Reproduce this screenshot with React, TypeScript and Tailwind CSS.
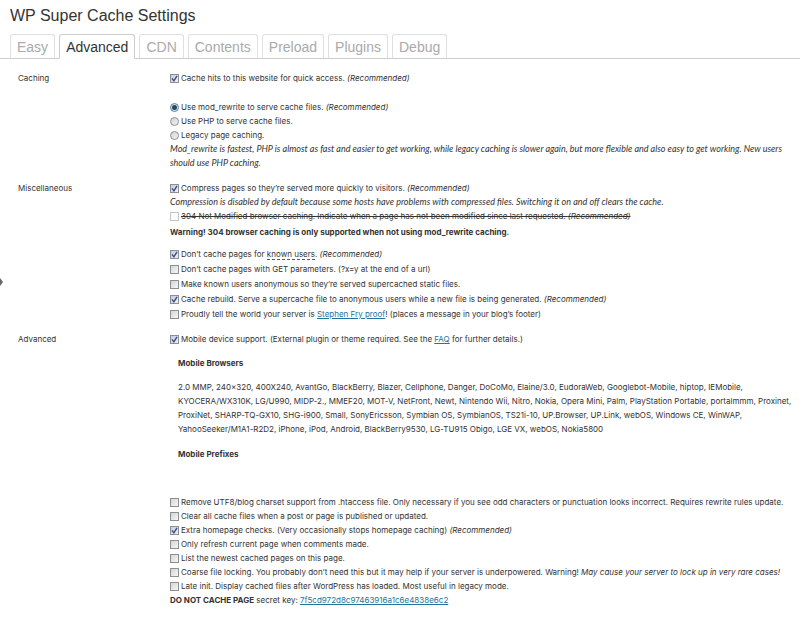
import { useId, useState, type ReactNode } from "react";

const tabs = ["Easy", "Advanced", "CDN", "Contents", "Preload", "Plugins", "Debug"];

const browserLines = [
  "2.0 MMP, 240x320, 400X240, AvantGo, BlackBerry, Blazer, Cellphone, Danger, DoCoMo, Elaine/3.0, EudoraWeb, Googlebot-Mobile, hiptop, IEMobile,",
  "KYOCERA/WX310K, LG/U990, MIDP-2., MMEF20, MOT-V, NetFront, Newt, Nintendo Wii, Nitro, Nokia, Opera Mini, Palm, PlayStation Portable, portalmmm, Proxinet,",
  "ProxiNet, SHARP-TQ-GX10, SHG-i900, Small, SonyEricsson, Symbian OS, SymbianOS, TS21i-10, UP.Browser, UP.Link, webOS, Windows CE, WinWAP,",
  "YahooSeeker/M1A1-R2D2, iPhone, iPod, Android, BlackBerry9530, LG-TU915 Obigo, LGE VX, webOS, Nokia5800",
];

function Recommended() {
  return <em>(Recommended)</em>;
}

function Check({ checked = false, disabled = false, children }: { checked?: boolean; disabled?: boolean; children: ReactNode }) {
  const id = useId();
  return (
    <div className="flex min-h-[14px] items-center gap-[2px]">
      <span className="grid size-[9px] shrink-0">
        <input
          id={id}
          type="checkbox"
          defaultChecked={checked}
          disabled={disabled}
          className="peer col-start-1 row-start-1 size-[9px] appearance-none border border-[#8e8f8f] bg-linear-to-br from-[#d3d6da] to-[#f6f6f6] checked:from-[#c3cbdc] checked:to-[#eef1f8] disabled:border-[#c4c4c4] disabled:from-[#fafafa] disabled:to-white"
        />
        <svg viewBox="0 0 9 9" className="pointer-events-none invisible col-start-1 row-start-1 size-[9px] peer-checked:visible" fill="none" stroke="#3a4c86" strokeWidth="1.4">
          <path d="M2 4.3 L3.9 6.8 L7 1.8" />
        </svg>
      </span>
      <label htmlFor={id} className={disabled ? "line-through" : ""}>
        {children}
      </label>
    </div>
  );
}

function Radio({ checked = false, children }: { checked?: boolean; children: ReactNode }) {
  const id = useId();
  return (
    <div className="flex min-h-[14px] items-center gap-[2px]">
      <span className="grid size-[9px] shrink-0 place-items-center">
        <input
          id={id}
          type="radio"
          name="delivery"
          defaultChecked={checked}
          className="peer col-start-1 row-start-1 size-[9px] appearance-none rounded-full border border-[#8e8f8f] bg-linear-to-br from-[#cfd1d4] to-[#f4f4f4] checked:border-[#5f7d93] checked:from-[#c5dbe8] checked:to-[#e6f2f8]"
        />
        <span className="pointer-events-none invisible col-start-1 row-start-1 size-[5px] rounded-full bg-[#1b4a6b] peer-checked:visible" />
      </span>
      <label htmlFor={id}>{children}</label>
    </div>
  );
}

function Link({ children }: { children: ReactNode }) {
  return (
    <a href="#" className="text-[#21759b] underline">
      {children}
    </a>
  );
}

function Note({ children }: { children: ReactNode }) {
  return <p className="font-[Lato,sans-serif] text-[9px] leading-[14px] italic">{children}</p>;
}

function Section({ title, children }: { title: string; children: ReactNode }) {
  return (
    <section className="flex">
      <h2 className="w-[152px] shrink-0">{title}</h2>
      <div className="min-w-0 flex-1">{children}</div>
    </section>
  );
}

export default function App() {
  const [active, setActive] = useState("Advanced");
  return (
    <div className="relative min-h-screen bg-white font-['Liberation_Sans',Arial,sans-serif] text-[#333]">
      <span className="absolute top-[278px] left-0 h-0 w-0 border-y-4 border-l-[3px] border-y-transparent border-l-[#666]" />
      <h1 className="px-[10px] pt-[6px] text-[16px] leading-[20px] text-[#333]">WP Super Cache Settings</h1>
      <nav className="mt-2 flex gap-1 border-b border-[#ccc] pl-[10px]">
        {tabs.map((tab) => (
          <button
            key={tab}
            type="button"
            onClick={() => setActive(tab)}
            className={
              "-mb-px h-[25px] rounded-t-[3px] border px-[6px] text-[14px] leading-[22px] " +
              (tab === active ? "border-[#ccc] border-b-white bg-white text-[#333]" : "border-[#dfdfdf] border-b-[#ccc] text-[#aaa]")
            }
          >
            {tab}
          </button>
        ))}
      </nav>
      <main className="flex flex-col gap-[11px] pt-3 pr-1 pb-1 pl-[18px] font-[Inter,sans-serif] text-[8px] leading-[14px]">
        <Section title="Caching">
          <Check checked>
            Cache hits to this website for quick access. <Recommended />
          </Check>
          <div className="mt-[15px]">
            <Radio checked>
              Use mod_rewrite to serve cache files. <Recommended />
            </Radio>
            <Radio>Use PHP to serve cache files.</Radio>
            <Radio>Legacy page caching.</Radio>
          </div>
          <Note>
            Mod_rewrite is fastest, PHP is almost as fast and easier to get working, while legacy caching is slower again, but more flexible and also easy to get working. New users
            should use PHP caching.
          </Note>
        </Section>
        <Section title="Miscellaneous">
          <Check checked>
            Compress pages so they’re served more quickly to visitors. <Recommended />
          </Check>
          <Note>Compression is disabled by default because some hosts have problems with compressed files. Switching it on and off clears the cache.</Note>
          <Check disabled>
            304 Not Modified browser caching. Indicate when a page has not been modified since last requested. <Recommended />
          </Check>
          <p className="mt-[2px] font-bold">Warning! 304 browser caching is only supported when not using mod_rewrite caching.</p>
          <div className="mt-2 flex flex-col gap-px">
            <Check checked>
              Don’t cache pages for <span className="border-b border-dashed border-[#555]">known users</span>. <Recommended />
            </Check>
            <Check>Don’t cache pages with GET parameters. (?x=y at the end of a url)</Check>
            <Check>Make known users anonymous so they’re served supercached static files.</Check>
            <Check checked>
              Cache rebuild. Serve a supercache file to anonymous users while a new file is being generated. <Recommended />
            </Check>
            <Check>
              Proudly tell the world your server is <Link>Stephen Fry proof</Link>! (places a message in your blog’s footer)
            </Check>
          </div>
        </Section>
        <Section title="Advanced">
          <Check checked>
            Mobile device support. (External plugin or theme required. See the <Link>FAQ</Link> for further details.)
          </Check>
          <div className="mt-[10px] pl-2">
            <h3 className="font-bold">Mobile Browsers</h3>
            <p className="mt-[10px]">
              {browserLines.map((line) => (
                <span key={line} className="block">
                  {line}
                </span>
              ))}
            </p>
            <h3 className="mt-[11px] font-bold">Mobile Prefixes</h3>
          </div>
          <div className="mt-[34px]">
            <Check>Remove UTF8/blog charset support from .htaccess file. Only necessary if you see odd characters or punctuation looks incorrect. Requires rewrite rules update.</Check>
            <Check>Clear all cache files when a post or page is published or updated.</Check>
            <Check checked>
              Extra homepage checks. (Very occasionally stops homepage caching) <Recommended />
            </Check>
            <Check>Only refresh current page when comments made.</Check>
            <Check>List the newest cached pages on this page.</Check>
            <Check>
              Coarse file locking. You probably don’t need this but it may help if your server is underpowered. Warning! <em>May cause your server to lock up in very rare cases!</em>
            </Check>
            <Check>Late init. Display cached files after WordPress has loaded. Most useful in legacy mode.</Check>
          </div>
          <p>
            <strong>DO NOT CACHE PAGE</strong> secret key: <Link>7f5cd972d8c97463916a1c6e4838e6c2</Link>
          </p>
        </Section>
      </main>
    </div>
  );
}
